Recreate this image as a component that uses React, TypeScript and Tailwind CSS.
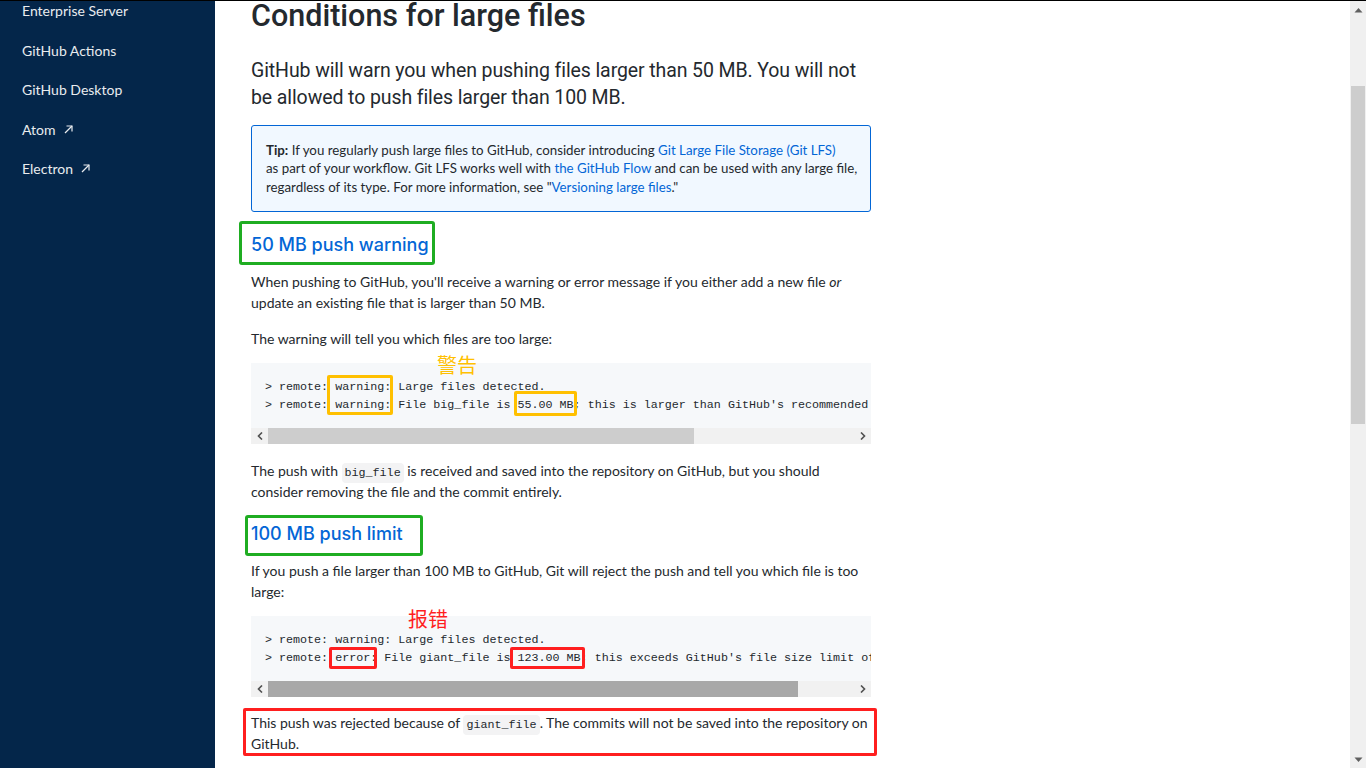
import React from "react";

const body = { fontFamily: 'Lato, "Noto Sans", Arial, sans-serif' };
const head = { fontFamily: 'Roboto, Inter, "Noto Sans", sans-serif' };
const h2f = { fontFamily: 'Inter, Roboto, "Noto Sans", sans-serif' };
const mono = { fontFamily: '"Liberation Mono", "DejaVu Sans Mono", monospace' };
const cjk = { fontFamily: '"Noto Sans CJK SC", "Noto Sans", sans-serif' };

function ArrowOut() {
  return (
    <svg width="11" height="11" viewBox="0 0 11 11" fill="none" stroke="currentColor" strokeWidth="1.2" className="ml-[7px] inline-block">
      <path d="M2 9 L9 2" />
      <path d="M3.5 2 H9 V7.5" />
    </svg>
  );
}

function HScroll({ thumb, dark }: { thumb: number; dark?: boolean }) {
  return (
    <div className="flex h-[16px] w-full items-center bg-[#f1f1f1]">
      <div className="flex h-full w-[17px] items-center justify-center">
        <svg width="6" height="8" viewBox="0 0 6 8"><path d="M5 0.5 L1.5 4 L5 7.5" stroke="#505050" strokeWidth="1.6" fill="none" /></svg>
      </div>
      <div className="relative h-full flex-1">
        <div className={dark ? "h-full bg-[#a8a8a8]" : "h-full bg-[#cdcdcd]"} style={{ width: thumb }} />
      </div>
      <div className="flex h-full w-[17px] items-center justify-center">
        <svg width="6" height="8" viewBox="0 0 6 8"><path d="M1 0.5 L4.5 4 L1 7.5" stroke="#505050" strokeWidth="1.6" fill="none" /></svg>
      </div>
    </div>
  );
}

function Code({ children }: { children: React.ReactNode }) {
  return (
    <code className="rounded-[4px] bg-[#f3f3f4] px-[3px] py-[3px] text-[11.7px] leading-none text-[#24292e]" style={mono}>
      {children}
    </code>
  );
}

export default function App() {
  return (
    <div className="flex h-[768px] w-[1366px] overflow-hidden border-t border-black bg-white text-[#24292e]" style={body}>
      {/* Sidebar */}
      <aside className="w-[215px] shrink-0 bg-[#04264a] text-[14px] text-[#e9ecef]">
        <ul className="-mt-[1px] pl-[22px]">
          <li className="h-[39.5px] leading-[21px]">Enterprise Server</li>
          <li className="h-[39.5px] leading-[21px]">GitHub Actions</li>
          <li className="h-[39.5px] leading-[21px]">GitHub Desktop</li>
          <li className="flex h-[39.5px] items-start leading-[21px]"><span className="flex items-center">Atom<ArrowOut /></span></li>
          <li className="flex h-[39.5px] items-start leading-[21px]"><span className="flex items-center">Electron<ArrowOut /></span></li>
        </ul>
      </aside>

      {/* Main */}
      <main className="flex-1 overflow-hidden">
        <div className="ml-[36px] w-[620px]">
          <h1 className="-mt-[4px] text-[30.5px] font-medium leading-[37.5px] text-[#24292e]" style={head}>
            Conditions for large files
          </h1>

          <p className="mt-[22px] text-[19.5px] leading-[27px] tracking-[-0.1px] text-[#24292e]" style={head}>
            GitHub will warn you when pushing files larger than 50 MB. You will not be allowed to push files larger than 100 MB.
          </p>

          <div className="mt-[14px] rounded-[3px] border border-[#0366d6] bg-[#f1f8ff] py-[15px] pl-[14px] pr-[4px] text-[13.3px] leading-[18.5px]">
            <strong className="font-bold">Tip:</strong> If you regularly push large files to GitHub, consider introducing{" "}
            <span className="text-[#0366d6]">Git Large File Storage (Git LFS)</span>
            <br />
            as part of your workflow. Git LFS works well with{" "}
            <span className="text-[#0366d6]">the GitHub Flow</span> and can be used with any large file,
            <br />
            regardless of its type. For more information, see "
            <span className="text-[#0366d6]">Versioning large files</span>."
          </div>

          <div className="relative mt-[22px]">
            <h2 className="text-[18px] font-medium leading-[22.5px] text-[#0366d6]" style={h2f}>
              50 MB push warning
            </h2>
            <div className="pointer-events-none absolute left-[-12px] top-[-13px] h-[44px] w-[196px] rounded-[3px] border-[3px] border-[#1fad22]" />
          </div>

          <p className="mt-[14px] text-[14px] leading-[21px]">
            When pushing to GitHub, you'll receive a warning or error message if you either add a new file <em>or</em> update an existing file that is larger than 50 MB.
          </p>
          <p className="mt-[15px] text-[14px] leading-[21px]">The warning will tell you which files are too large:</p>

          <div className="relative mt-[14px] bg-[#f6f8fa]">
            <pre className="overflow-hidden whitespace-pre pb-[14px] pl-[14px] pt-[15px] text-[11.7px] leading-[18px] text-[#24292e]" style={mono}>
{`> remote: warning: Large files detected.
> remote: warning: File big_file is 55.00 MB; this is larger than GitHub's recommended maximum file size of 50.00 MB`}
            </pre>
            <HScroll thumb={426} />
            <div className="pointer-events-none absolute left-[76px] top-[12px] h-[40px] w-[66px] rounded-[2px] border-[3px] border-[#ffc000]" />
            <div className="pointer-events-none absolute left-[263px] top-[28px] h-[25px] w-[63px] rounded-[2px] border-[3px] border-[#ffc000]" />
            <div className="pointer-events-none absolute left-[186px] top-[-9px] text-[20px] leading-[22px] text-[#ffc000]" style={cjk}>警告</div>
          </div>

          <p className="mt-[16px] text-[14px] leading-[21px]">
            The push with <Code>big_file</Code> is received and saved into the repository on GitHub, but you should consider removing the file and the commit entirely.
          </p>

          <div className="relative mt-[21px]">
            <h2 className="text-[18px] font-medium leading-[22.5px] text-[#0366d6]" style={h2f}>
              100 MB push limit
            </h2>
            <div className="pointer-events-none absolute left-[-6px] top-[-8px] h-[41px] w-[178px] rounded-[3px] border-[3px] border-[#1fad22]" />
          </div>

          <p className="mt-[15px] text-[14px] leading-[21px]">
            If you push a file larger than 100 MB to GitHub, Git will reject the push and tell you which file is too large:
          </p>

          <div className="relative mt-[14px] bg-[#f6f8fa]">
            <pre className="overflow-hidden whitespace-pre pb-[14px] pl-[14px] pt-[15px] text-[11.7px] leading-[18px] text-[#24292e]" style={mono}>
{`> remote: warning: Large files detected.
> remote: error: File giant_file is 123.00 MB; this exceeds GitHub's file size limit of 100.00 MB`}
            </pre>
            <HScroll thumb={530} dark />
            <div className="pointer-events-none absolute left-[78px] top-[31px] h-[22px] w-[48px] rounded-[2px] border-[3px] border-[#ff1f1f]" />
            <div className="pointer-events-none absolute left-[259px] top-[31px] h-[22px] w-[75px] rounded-[2px] border-[3px] border-[#ff1f1f]" />
            <div className="pointer-events-none absolute left-[157px] top-[-8px] text-[20px] leading-[22px] text-[#ff1f1f]" style={cjk}>报错</div>
          </div>

          <div className="relative mt-[15px]">
            <p className="text-[14px] leading-[21px]">
              This push was rejected because of <Code>giant_file</Code>. The commits will not be saved into the repository on GitHub.
            </p>
            <div className="pointer-events-none absolute left-[-8px] top-[-4px] h-[48px] w-[634px] rounded-[2px] border-[3px] border-[#ff1f1f]" />
          </div>
        </div>
      </main>

      {/* Page scrollbar */}
      <div className="relative flex w-[16px] shrink-0 flex-col bg-[#f0f0f0]">
        <div className="flex h-[17px] items-center justify-center">
          <svg width="9" height="6" viewBox="0 0 9 6"><path d="M0.5 5.5 L4.5 1 L8.5 5.5 Z" fill="#606060" /></svg>
        </div>
        <div className="mx-[1px] mt-[68px] h-[338px] bg-[#cdcdcd]" />
        <div className="flex-1" />
        <div className="flex h-[17px] items-center justify-center">
          <svg width="9" height="6" viewBox="0 0 9 6"><path d="M0.5 0.5 L4.5 5 L8.5 0.5 Z" fill="#606060" /></svg>
        </div>
      </div>
    </div>
  );
}
